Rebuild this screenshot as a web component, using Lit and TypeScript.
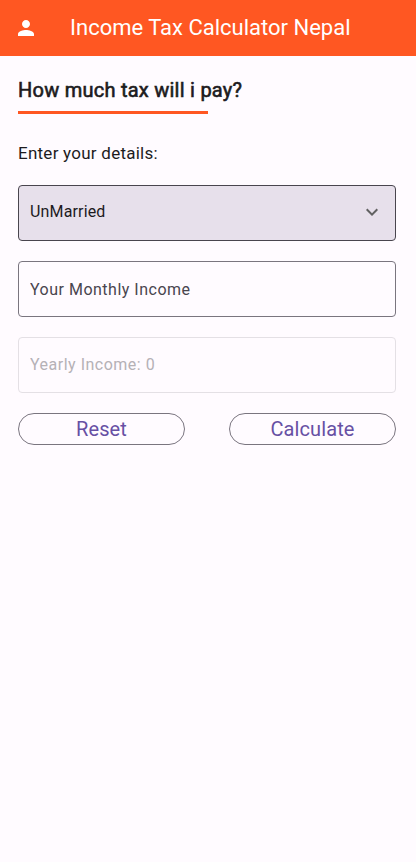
import { LitElement, html, css } from "lit";
import { customElement, state } from "lit/decorators.js";

@customElement("app-root")
export class AppRoot extends LitElement {
  @state() private income = "";

  static styles = css`
    :host {
      display: block;
      min-height: 100vh;
      background: #fffbff;
      color: #1d1b1e;
      font-family: Roboto, "Liberation Sans", sans-serif;
    }
    * {
      box-sizing: border-box;
    }
    .bar {
      display: flex;
      align-items: center;
      gap: 32px;
      height: 56px;
      padding: 0 14px;
      background: #ff5722;
      color: #fff;
    }
    .bar svg {
      width: 24px;
      height: 24px;
      fill: currentColor;
    }
    .bar h1 {
      margin: 0;
      font-size: 22px;
      line-height: 28px;
      font-weight: 400;
      white-space: nowrap;
    }
    main {
      padding: 20px 20px 20px 18px;
    }
    h2 {
      margin: 0;
      font-size: 20px;
      line-height: 28px;
      font-weight: 400;
      letter-spacing: 0.25px;
      -webkit-text-stroke: 0.03em currentColor;
    }
    .rule {
      width: 190px;
      height: 3px;
      margin-top: 7px;
      background: #ff5722;
    }
    .intro {
      margin: 27px 0 20px;
      font-size: 17px;
      line-height: 24px;
      letter-spacing: 0.25px;
    }
    form {
      display: grid;
      gap: 20px;
    }
    .select {
      display: grid;
      align-items: center;
    }
    .select > * {
      grid-area: 1 / 1;
    }
    .select svg {
      justify-self: end;
      width: 24px;
      height: 24px;
      margin: 0 12px 2px 0;
      fill: #616161;
      pointer-events: none;
    }
    .field {
      width: 100%;
      height: 56px;
      margin: 0;
      padding: 0 11px;
      border: 1px solid #7a757f;
      border-radius: 4px;
      background: transparent;
      color: #1d1b1e;
      font: inherit;
      font-size: 16px;
      letter-spacing: 0.5px;
      appearance: none;
    }
    .field::placeholder {
      color: #49454e;
      opacity: 1;
    }
    .field.choice {
      padding-bottom: 3px;
      border-color: #49454e;
      background: #e7e0eb;
      letter-spacing: 0.15px;
    }
    .field:disabled {
      padding-bottom: 2px;
      border-color: #e4e0e5;
    }
    .field:disabled::placeholder {
      color: #b5b1b6;
    }
    .actions {
      display: grid;
      grid-template-columns: 1fr 1fr;
      gap: 44px;
    }
    button {
      height: 32px;
      padding: 0;
      border: 1px solid #7a757f;
      border-radius: 16px;
      background: transparent;
      color: #6750a4;
      font: inherit;
      font-size: 20px;
      letter-spacing: 0.1px;
    }
  `;

  render() {
    return html`
      <header class="bar">
        <svg viewBox="0 0 24 24" aria-hidden="true">
          <path d="M12 12c2.21 0 4-1.79 4-4s-1.79-4-4-4-4 1.79-4 4 1.79 4 4 4zm0 2c-2.67 0-8 1.34-8 4v2h16v-2c0-2.66-5.33-4-8-4z" />
        </svg>
        <h1>Income Tax Calculator Nepal</h1>
      </header>
      <main>
        <h2>How much tax will i pay?</h2>
        <div class="rule"></div>
        <p class="intro">Enter your details:</p>
        <form @submit=${(e: Event) => e.preventDefault()} @reset=${() => (this.income = "")}>
          <div class="select">
            <select class="field choice" aria-label="Marital status">
              <option>UnMarried</option>
              <option>Married</option>
            </select>
            <svg viewBox="0 0 24 24" aria-hidden="true">
              <path d="M16.59 8.59 12 13.17 7.41 8.59 6 10l6 6 6-6z" />
            </svg>
          </div>
          <input
            class="field"
            inputmode="numeric"
            aria-label="Your Monthly Income"
            placeholder="Your Monthly Income"
            @input=${(e: Event) => (this.income = (e.target as HTMLInputElement).value)}
          />
          <input
            class="field"
            disabled
            aria-label="Yearly Income"
            placeholder=${`Yearly Income: ${(Number(this.income) || 0) * 12}`}
          />
          <div class="actions">
            <button type="reset">Reset</button>
            <button type="submit">Calculate</button>
          </div>
        </form>
      </main>
    `;
  }
}
